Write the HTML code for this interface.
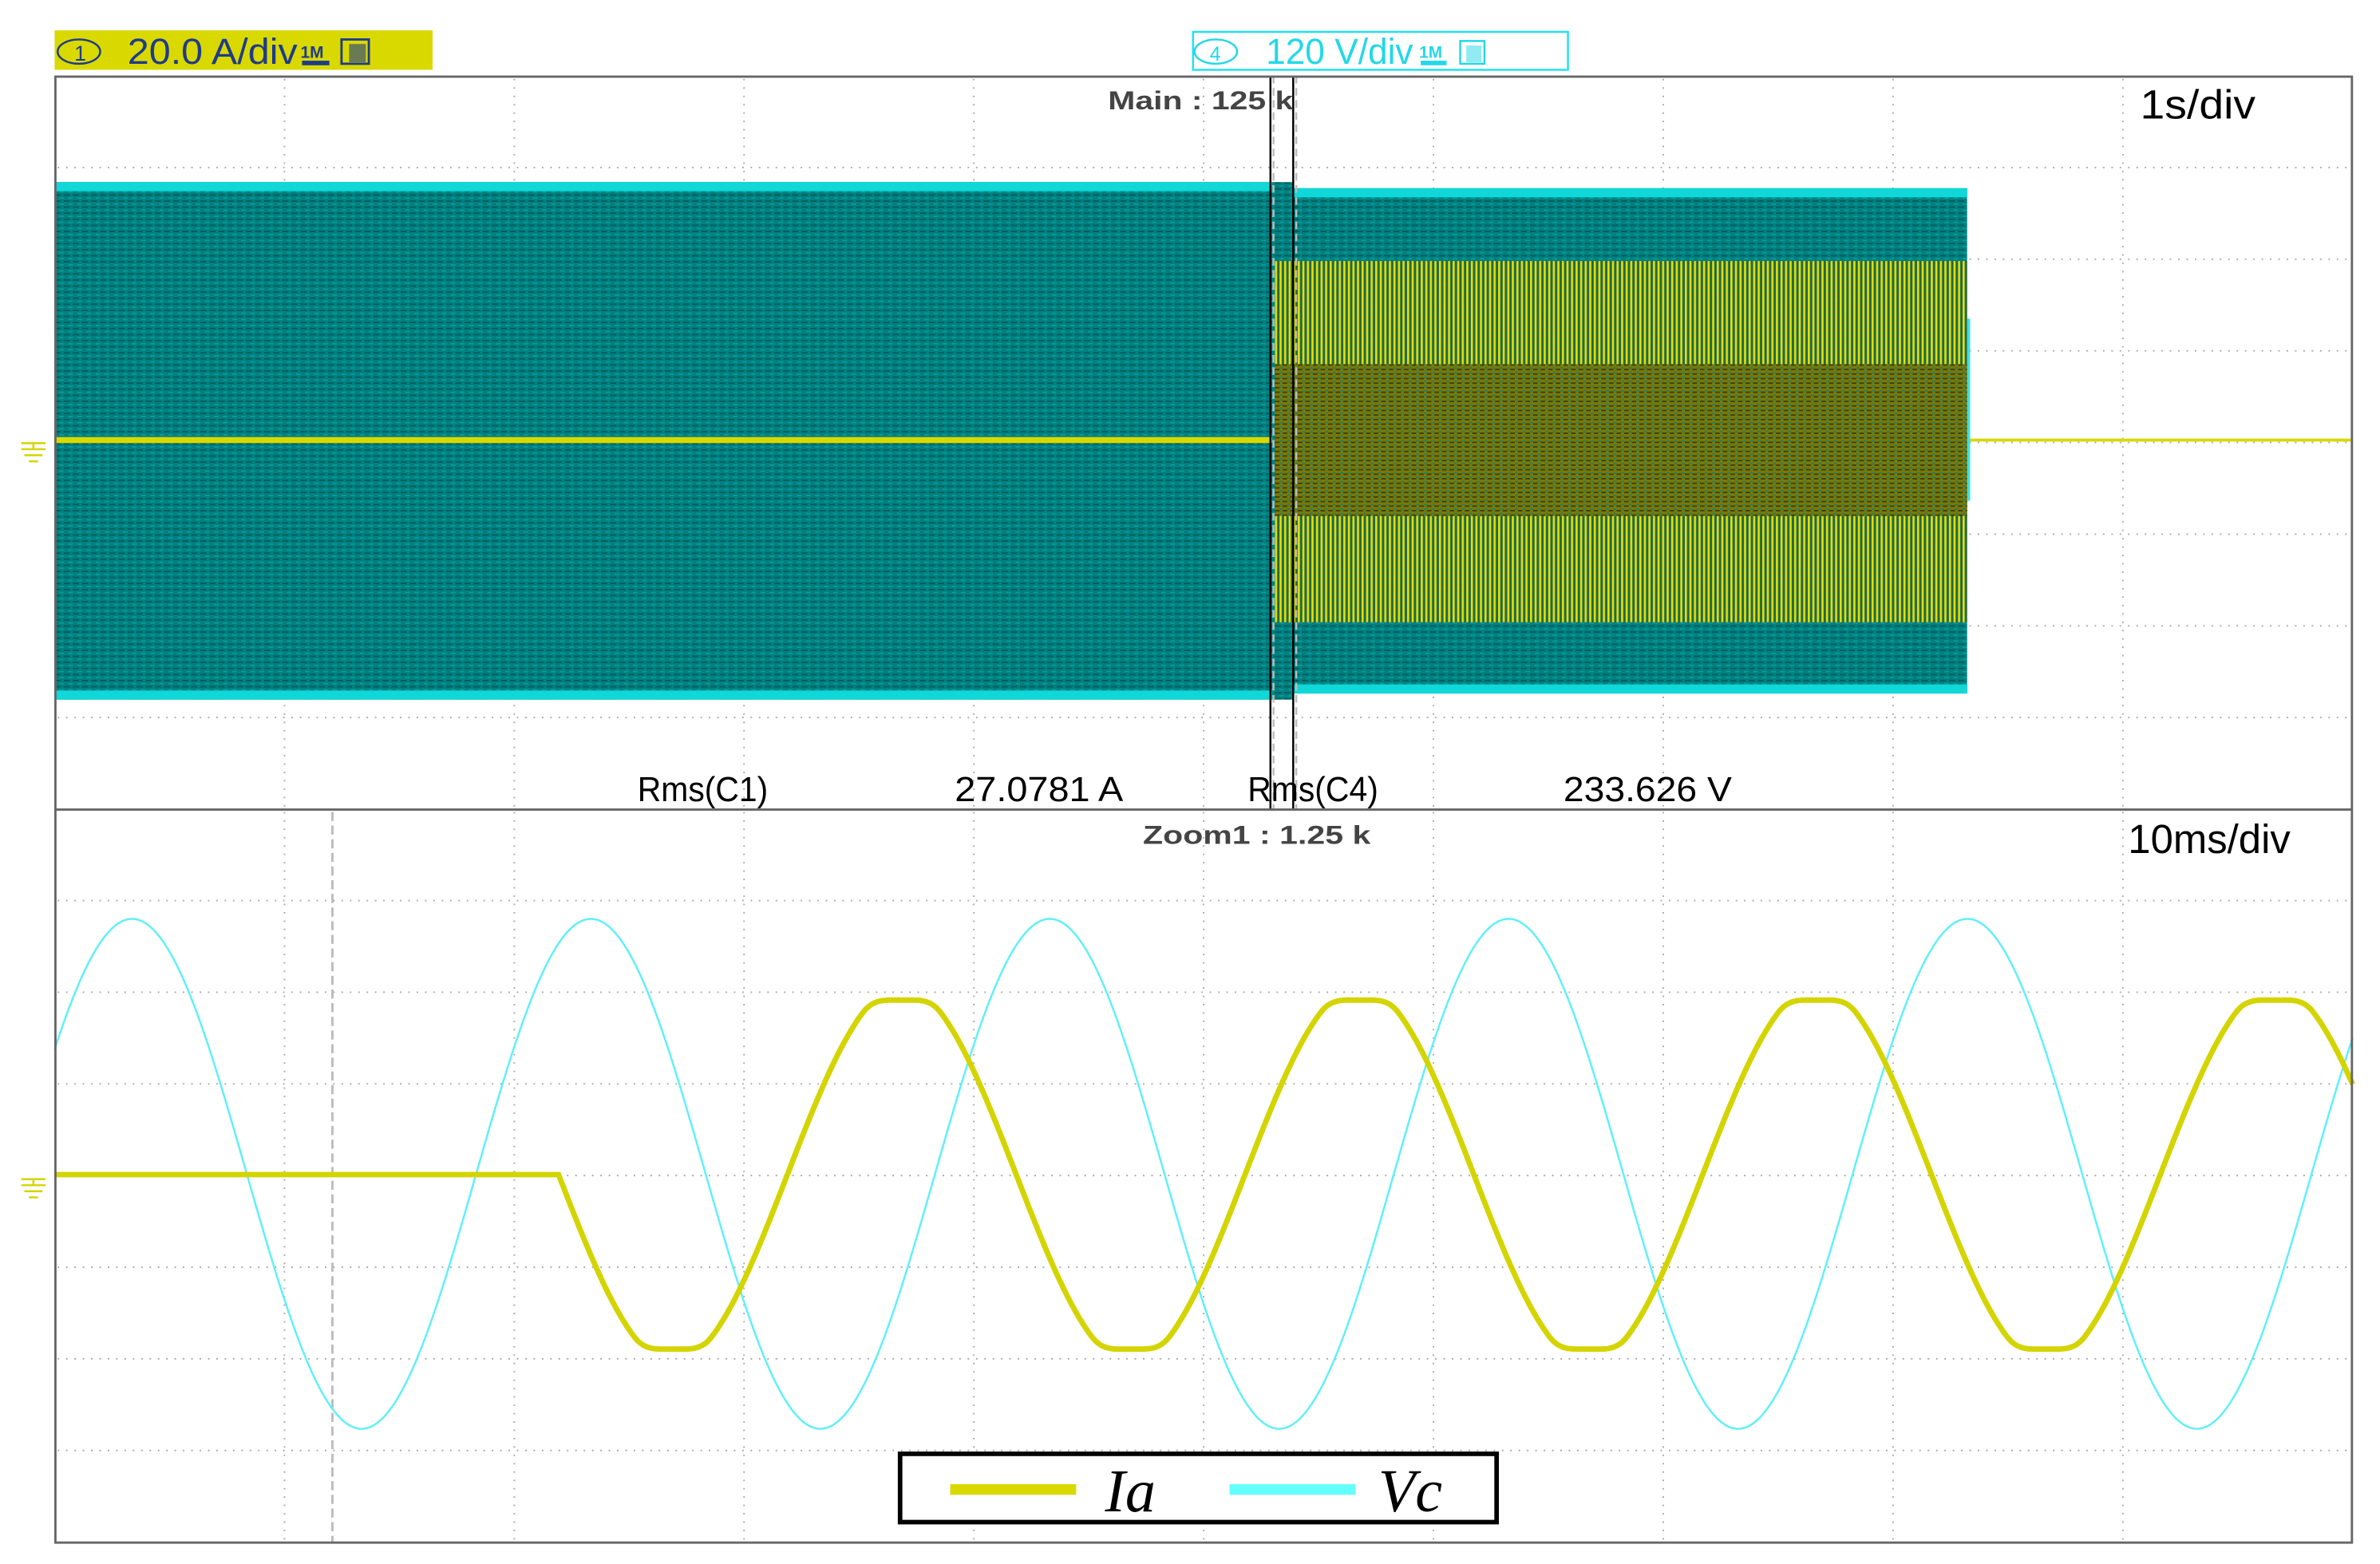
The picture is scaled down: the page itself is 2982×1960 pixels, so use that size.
<!DOCTYPE html>
<html><head><meta charset="utf-8"><style>
html,body{margin:0;padding:0;background:#fff;width:2982px;height:1960px;overflow:hidden}
svg{display:block}
</style></head><body>
<svg id="s" width="2982" height="1960" viewBox="0 0 1568 1030.6" preserveAspectRatio="none" xmlns="http://www.w3.org/2000/svg">
<defs>
<pattern id="teal" width="6" height="4" patternUnits="userSpaceOnUse">
<rect width="6" height="4" fill="#008080"/>
<rect x="0" y="0" width="4" height="1" fill="#005c5c"/>
<rect x="3" y="2" width="3" height="1" fill="#0a9a9a"/>
</pattern>
<pattern id="ystripe" width="3" height="4" patternUnits="userSpaceOnUse">
<rect width="3" height="4" fill="#1a6a5a"/>
<rect x="0" y="0" width="1.4" height="4" fill="#e0e000"/>
<rect x="2" y="1" width="1" height="1" fill="#4a5a20"/>
</pattern>
<pattern id="olive" width="5" height="3" patternUnits="userSpaceOnUse">
<rect width="5" height="3" fill="#7a7a00"/>
<rect x="0" y="0" width="3" height="1" fill="#404000"/>
<rect x="3" y="2" width="2" height="1" fill="#1a8080"/>
</pattern>
</defs>

<rect x="36" y="20" width="249" height="26" fill="#d9d900"/>
<ellipse cx="52" cy="34" rx="14" ry="8" fill="none" stroke="#1f3b8a" stroke-width="1.3"/>
<text x="49" y="40" font-family="Liberation Sans, sans-serif" font-size="14" fill="#1f3b8a">1</text>
<text x="84" y="42" font-family="Liberation Sans, sans-serif" font-size="24" fill="#1f3b8a" textLength="112" lengthAdjust="spacingAndGlyphs">20.0 A/div</text>
<text x="198" y="38" font-family="Liberation Sans, sans-serif" font-size="11" font-weight="bold" fill="#1f3b8a">1M</text>
<rect x="199" y="40" width="18" height="3" fill="#1f3b8a"/>
<rect x="225" y="26" width="18" height="16" fill="none" stroke="#1f3b8a" stroke-width="1.5"/>
<rect x="230" y="29" width="11" height="12" fill="#1f3b8a" opacity="0.6"/>

<rect x="786" y="21" width="247" height="25" fill="#fff" stroke="#22e0f0" stroke-width="1.3"/>
<ellipse cx="801" cy="34" rx="14" ry="8" fill="none" stroke="#22d8e8" stroke-width="1.3"/>
<text x="797" y="40" font-family="Liberation Sans, sans-serif" font-size="13" fill="#22d8e8">4</text>
<text x="834" y="42" font-family="Liberation Sans, sans-serif" font-size="24" fill="#22d8e8" textLength="97" lengthAdjust="spacingAndGlyphs">120 V/div</text>
<text x="935" y="38" font-family="Liberation Sans, sans-serif" font-size="11" font-weight="bold" fill="#22d8e8">1M</text>
<rect x="936" y="40" width="17" height="3" fill="#22d8e8"/>
<rect x="962" y="27" width="16" height="15" fill="none" stroke="#22d8e8" stroke-width="1.3"/>
<rect x="966" y="30" width="10" height="11" fill="#22d8e8" opacity="0.5"/>

<g id="grid" stroke="#aaa" stroke-width="1" stroke-dasharray="1 4.5"></g>

<rect x="36" y="120" width="816" height="341" fill="url(#teal)"/>
<rect x="36" y="120" width="802" height="6" fill="#10d8d8"/>
<rect x="36" y="455" width="802" height="6" fill="#10d8d8"/>
<rect x="852" y="124" width="444" height="333" fill="url(#teal)"/>
<rect x="852" y="124" width="444" height="6" fill="#10d8d8"/>
<rect x="852" y="451" width="444" height="6" fill="#10d8d8"/>
<rect x="840" y="172" width="456" height="68" fill="url(#ystripe)"/>
<rect x="840" y="240" width="456" height="100" fill="url(#olive)"/>
<rect x="840" y="340" width="456" height="70" fill="url(#ystripe)"/>
<rect x="36" y="288" width="802" height="4" fill="#d9d900"/>
<rect x="1298" y="289" width="252" height="2" fill="#d9d900"/>
<rect x="1296" y="210" width="2" height="120" fill="#40e0e0"/>
<line x1="837" y1="50" x2="837" y2="533" stroke="#000" stroke-width="1.3"/>
<line x1="852" y1="50" x2="852" y2="533" stroke="#000" stroke-width="1.3"/>
<line x1="839" y1="50" x2="839" y2="533" stroke="#bbb" stroke-width="1.3" stroke-dasharray="5 3"/>
<line x1="854" y1="50" x2="854" y2="533" stroke="#bbb" stroke-width="1.3" stroke-dasharray="5 3"/>

<g font-family="Liberation Sans, sans-serif" fill="#000">
<text x="730" y="72" font-size="17" font-weight="bold" fill="#444" textLength="122" lengthAdjust="spacingAndGlyphs">Main : 125 k</text>
<text x="1410" y="78" font-size="27" textLength="76" lengthAdjust="spacingAndGlyphs">1s/div</text>
<text x="420" y="528" font-size="23" textLength="86" lengthAdjust="spacingAndGlyphs">Rms(C1)</text>
<text x="629" y="528" font-size="23" textLength="111" lengthAdjust="spacingAndGlyphs">27.0781 A</text>
<text x="822" y="528" font-size="23" textLength="86" lengthAdjust="spacingAndGlyphs">Rms(C4)</text>
<text x="1030" y="528" font-size="23" textLength="111" lengthAdjust="spacingAndGlyphs">233.626 V</text>
<text x="753" y="556" font-size="17" font-weight="bold" fill="#444" textLength="150" lengthAdjust="spacingAndGlyphs">Zoom1 : 1.25 k</text>
<text x="1402" y="562" font-size="27" textLength="107" lengthAdjust="spacingAndGlyphs">10ms/div</text>
</g>

<line x1="219" y1="535" x2="219" y2="1016" stroke="#bbb" stroke-width="1.5" stroke-dasharray="6 3"/>

<path id="vc" fill="none" stroke="#60f0f8" stroke-width="1.3"/>
<path id="ia" fill="none" stroke="#d4d400" stroke-width="3.6"/>

<g stroke="#d4d400" stroke-width="1.3">
<line x1="14" y1="292" x2="30" y2="292"/><line x1="22" y1="292" x2="22" y2="296"/>
<line x1="14" y1="296" x2="30" y2="296"/><line x1="16" y1="300" x2="28" y2="300"/><line x1="19" y1="304" x2="25" y2="304"/>
<line x1="14" y1="777" x2="30" y2="777"/><line x1="22" y1="777" x2="22" y2="781"/>
<line x1="14" y1="781" x2="30" y2="781"/><line x1="16" y1="785" x2="28" y2="785"/><line x1="19" y1="789" x2="25" y2="789"/>
</g>

<rect x="36.5" y="50.5" width="1513" height="966" fill="none" stroke="#666" stroke-width="1.5"/>
<line x1="36" y1="533.5" x2="1550" y2="533.5" stroke="#666" stroke-width="1.5"/>

<rect x="593" y="958" width="393" height="45" fill="#fff" stroke="#000" stroke-width="3"/>
<rect x="626" y="978" width="83" height="7" fill="#d9d900"/>
<text x="728" y="996" font-family="Liberation Serif, serif" font-style="italic" font-size="40">Ia</text>
<rect x="810" y="978" width="83" height="7" fill="#66ffff"/>
<text x="908" y="996" font-family="Liberation Serif, serif" font-style="italic" font-size="40">Vc</text>
</svg>
<script>
var ns="http://www.w3.org/2000/svg",g=document.getElementById('grid');
function L(a,b,c,d){var l=document.createElementNS(ns,'line');l.setAttribute('x1',a);l.setAttribute('y1',b);l.setAttribute('x2',c);l.setAttribute('y2',d);g.appendChild(l);}
for(var i=1;i<10;i++){var x=36+i*151.4;L(x,52,x,532);L(x,535,x,1016);}
for(var j=1;j<8;j++){L(38,50+j*60.4,1548,50+j*60.4);L(38,533+j*60.4,1548,533+j*60.4);}
var d="";for(var x=36;x<=1550;x+=1){var y=773.5-168*Math.cos(2*Math.PI*(x-87)/302.3);d+=(x==36?"M":"L")+x+" "+y.toFixed(1);}
document.getElementById('vc').setAttribute('d',d);
function soft(v,c){var a=Math.abs(v),k=8;if(a<c-k)return v;var t=Math.min(1,(a-(c-k))/(2*k));var r=(c-k)+k*(1-Math.pow(1-t,2))*1+0;if(a>c+k)r=c;return v<0?-Math.min(r,c):Math.min(r,c);}
d="M36 774L368 774";for(var x=368;x<=1550;x+=1){var v=124*Math.sin(2*Math.PI*(x-368)/301.5);v=soft(v,115);d+="L"+x+" "+(774+v).toFixed(1);}
document.getElementById('ia').setAttribute('d',d);
</script>
</body></html>
